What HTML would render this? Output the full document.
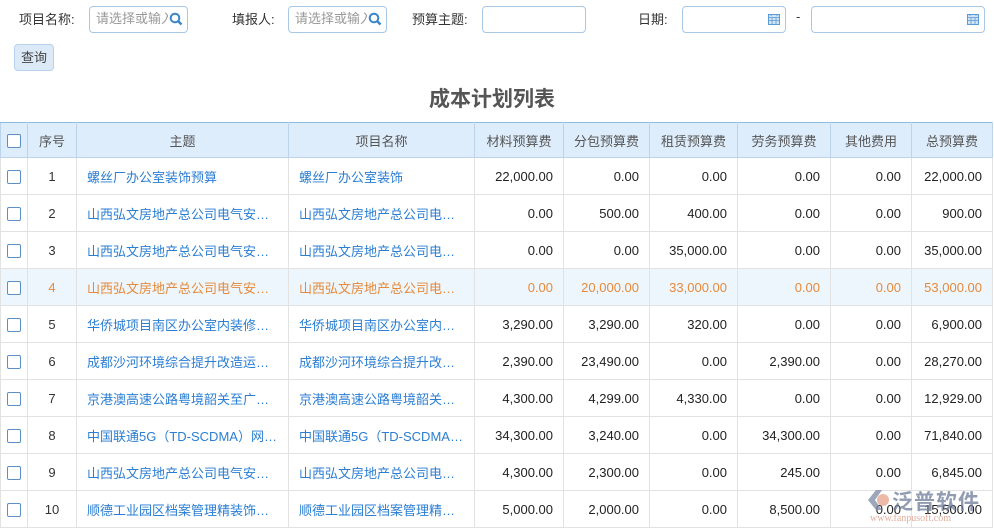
<!DOCTYPE html><html><head><meta charset="utf-8"><style>
body{margin:0;width:994px;height:530px;overflow:hidden;background:#fff;font-family:"Liberation Sans","Noto Sans CJK SC",sans-serif;font-size:13px;color:#333;position:relative}
.a{position:absolute}
.lbl{position:absolute;top:9px;font-size:13px;color:#333}
.inp{position:absolute;top:6px;height:27px;border:1px solid #a9c8e6;border-radius:4px;box-sizing:border-box;background:#fff;color:#999;font-size:13px;line-height:24px;padding-left:6px;overflow:hidden;white-space:nowrap}
.ph{display:inline-block;width:72px;overflow:hidden}
table{position:absolute;left:0;top:122px;border-collapse:collapse;table-layout:fixed;width:992px}
td,th{border:1px solid #e2e2e2;height:36px;padding:0 10px;white-space:nowrap;overflow:hidden;font-size:13px}
th{background:#deedfb;border-color:#bcd4ec;font-weight:normal;color:#555;height:34px}
th{border-top:1px solid #8db8e0}
td.n{text-align:right;color:#222}
td.c{text-align:center}
td.l{color:#2a7ed3}
tr.h td{background:#eef6fd;color:#e58a3a}
.cb{display:inline-block;width:12px;height:12px;border:1px solid #5b8fc7;border-radius:2px;background:#fff;vertical-align:middle}
</style></head><body>
<div class="lbl" style="left:19px">项目名称:</div>
<div class="inp" style="left:89px;width:99px"><span class="ph">请选择或输入</span><svg class="a" style="right:4px;top:5px" width="14" height="14" viewBox="0 0 14 14"><circle cx="6" cy="6" r="4.3" fill="none" stroke="#3b86c9" stroke-width="2"/><path d="M9 9l3.5 3.5" stroke="#3b86c9" stroke-width="2.4"/></svg></div>
<div class="lbl" style="left:232px">填报人:</div>
<div class="inp" style="left:288px;width:99px"><span class="ph">请选择或输入</span><svg class="a" style="right:4px;top:5px" width="14" height="14" viewBox="0 0 14 14"><circle cx="6" cy="6" r="4.3" fill="none" stroke="#3b86c9" stroke-width="2"/><path d="M9 9l3.5 3.5" stroke="#3b86c9" stroke-width="2.4"/></svg></div>
<div class="lbl" style="left:412px">预算主题:</div>
<div class="inp" style="left:482px;width:104px"></div>
<div class="lbl" style="left:638px">日期:</div>
<div class="inp" style="left:682px;width:104px"><svg class="a" style="right:5px;top:6px" width="12" height="12" viewBox="0 0 12 12"><rect x="0.5" y="1.5" width="11" height="10" fill="#cfe3f6" stroke="#5b9bd5"/><path d="M0.5 4.5h11M3 1v2M9 1v2M4 4.5v7M8 4.5v7M0.5 7.5h11" stroke="#5b9bd5" stroke-width="0.8"/></svg></div>
<div class="lbl" style="left:796px">-</div>
<div class="inp" style="left:811px;width:174px"><svg class="a" style="right:5px;top:6px" width="12" height="12" viewBox="0 0 12 12"><rect x="0.5" y="1.5" width="11" height="10" fill="#cfe3f6" stroke="#5b9bd5"/><path d="M0.5 4.5h11M3 1v2M9 1v2M4 4.5v7M8 4.5v7M0.5 7.5h11" stroke="#5b9bd5" stroke-width="0.8"/></svg></div>
<div class="a" style="left:14px;top:44px;width:40px;height:27px;border:1px solid #b7d2ec;border-radius:4px;background:#dceaf8;box-sizing:border-box;text-align:center;line-height:25px;color:#444">查询</div>
<div class="a" style="left:0;width:984px;top:83px;text-align:center;font-size:21px;font-weight:bold;color:#555">成本计划列表</div>
<table>
<colgroup><col style="width:27px"><col style="width:49px"><col style="width:212px"><col style="width:186px"><col style="width:89px"><col style="width:86px"><col style="width:88px"><col style="width:93px"><col style="width:81px"><col style="width:81px"></colgroup>
<tr><th style="padding:0"><span class="cb"></span></th><th>序号</th><th>主题</th><th>项目名称</th><th>材料预算费</th><th>分包预算费</th><th>租赁预算费</th><th>劳务预算费</th><th>其他费用</th><th>总预算费</th></tr>
<tr><td class="c" style="padding:0"><span class="cb"></span></td><td class="c">1</td><td class="l">螺丝厂办公室装饰预算</td><td class="l">螺丝厂办公室装饰</td><td class="n">22,000.00</td><td class="n">0.00</td><td class="n">0.00</td><td class="n">0.00</td><td class="n">0.00</td><td class="n">22,000.00</td></tr>
<tr><td class="c" style="padding:0"><span class="cb"></span></td><td class="c">2</td><td class="l">山西弘文房地产总公司电气安…</td><td class="l">山西弘文房地产总公司电…</td><td class="n">0.00</td><td class="n">500.00</td><td class="n">400.00</td><td class="n">0.00</td><td class="n">0.00</td><td class="n">900.00</td></tr>
<tr><td class="c" style="padding:0"><span class="cb"></span></td><td class="c">3</td><td class="l">山西弘文房地产总公司电气安…</td><td class="l">山西弘文房地产总公司电…</td><td class="n">0.00</td><td class="n">0.00</td><td class="n">35,000.00</td><td class="n">0.00</td><td class="n">0.00</td><td class="n">35,000.00</td></tr>
<tr class="h"><td class="c" style="padding:0"><span class="cb"></span></td><td class="c">4</td><td>山西弘文房地产总公司电气安…</td><td>山西弘文房地产总公司电…</td><td class="n">0.00</td><td class="n">20,000.00</td><td class="n">33,000.00</td><td class="n">0.00</td><td class="n">0.00</td><td class="n">53,000.00</td></tr>
<tr><td class="c" style="padding:0"><span class="cb"></span></td><td class="c">5</td><td class="l">华侨城项目南区办公室内装修…</td><td class="l">华侨城项目南区办公室内…</td><td class="n">3,290.00</td><td class="n">3,290.00</td><td class="n">320.00</td><td class="n">0.00</td><td class="n">0.00</td><td class="n">6,900.00</td></tr>
<tr><td class="c" style="padding:0"><span class="cb"></span></td><td class="c">6</td><td class="l">成都沙河环境综合提升改造运…</td><td class="l">成都沙河环境综合提升改…</td><td class="n">2,390.00</td><td class="n">23,490.00</td><td class="n">0.00</td><td class="n">2,390.00</td><td class="n">0.00</td><td class="n">28,270.00</td></tr>
<tr><td class="c" style="padding:0"><span class="cb"></span></td><td class="c">7</td><td class="l">京港澳高速公路粤境韶关至广…</td><td class="l">京港澳高速公路粤境韶关…</td><td class="n">4,300.00</td><td class="n">4,299.00</td><td class="n">4,330.00</td><td class="n">0.00</td><td class="n">0.00</td><td class="n">12,929.00</td></tr>
<tr><td class="c" style="padding:0"><span class="cb"></span></td><td class="c">8</td><td class="l">中国联通5G（TD-SCDMA）网…</td><td class="l">中国联通5G（TD-SCDMA…</td><td class="n">34,300.00</td><td class="n">3,240.00</td><td class="n">0.00</td><td class="n">34,300.00</td><td class="n">0.00</td><td class="n">71,840.00</td></tr>
<tr><td class="c" style="padding:0"><span class="cb"></span></td><td class="c">9</td><td class="l">山西弘文房地产总公司电气安…</td><td class="l">山西弘文房地产总公司电…</td><td class="n">4,300.00</td><td class="n">2,300.00</td><td class="n">0.00</td><td class="n">245.00</td><td class="n">0.00</td><td class="n">6,845.00</td></tr>
<tr><td class="c" style="padding:0"><span class="cb"></span></td><td class="c">10</td><td class="l">顺德工业园区档案管理精装饰…</td><td class="l">顺德工业园区档案管理精…</td><td class="n">5,000.00</td><td class="n">2,000.00</td><td class="n">0.00</td><td class="n">8,500.00</td><td class="n">0.00</td><td class="n">15,500.00</td></tr>
</table>
<div class="a" style="left:866px;top:486px;width:120px;height:40px;opacity:.75">
<svg class="a" style="left:0;top:2px" width="26" height="24" viewBox="0 0 26 24"><path d="M10 2L2 12l8 10h6L9 12l7-10z" fill="#7d8aa6"/><circle cx="17" cy="12" r="6" fill="#e8a48a"/></svg>
<div class="a" style="left:26px;top:0;font-size:21px;color:#6d7c9a;font-weight:bold;letter-spacing:1px">泛普软件</div>
<div class="a" style="left:4px;top:27px;font-size:10px;color:#d8907a;font-family:'Liberation Serif',serif">www.fanpusoft.com</div>
</div>
</body></html>
